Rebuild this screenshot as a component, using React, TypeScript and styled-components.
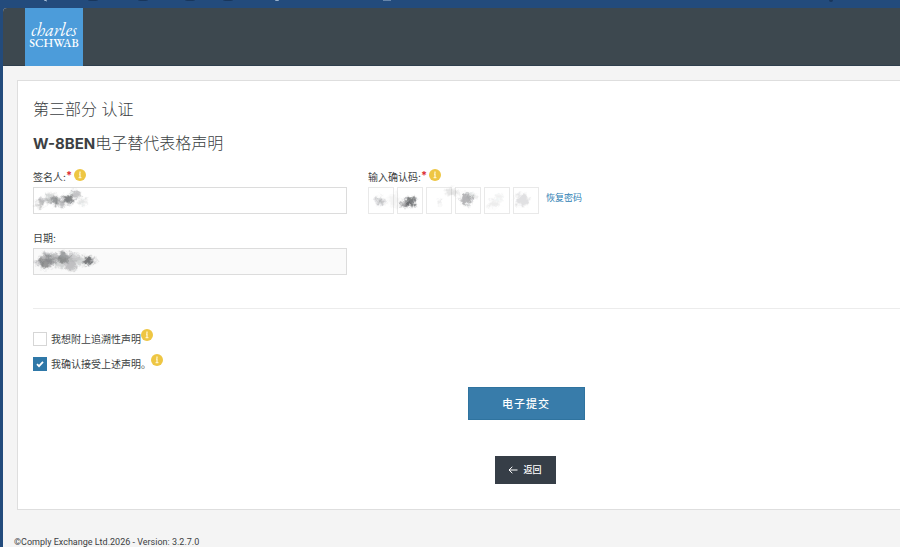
import React from 'react';
import styled, { createGlobalStyle } from 'styled-components';

const Global = createGlobalStyle`
  * { box-sizing: border-box; }
  html, body { margin: 0; min-height: 100%; background: #f4f4f4; }
  body {
    color: #3c3f43;
    font-family: Inter, "Noto Sans CJK SC", sans-serif;
    font-size: 10px;
    line-height: 16px;
  }
`;

const Desktop = styled.div`
  background: #234b7c;
  padding-left: 3px;
`;

const DesktopStrip = styled.svg`
  display: block;
  width: 100%;
  height: 8px;
`;

const Windowed = styled.div`
  min-height: calc(100vh - 8px);
  background: #f4f4f4;
  border-top-left-radius: 4px;
  overflow: hidden;
`;

const Header = styled.header`
  display: flex;
  height: 58px;
  padding-left: 22px;
  background: #3d484f;
  border-bottom: 1px solid #2f3f4d;
`;

const Brand = styled.a`
  display: flex;
  flex-direction: column;
  align-items: center;
  width: 58px;
  height: 58px;
  padding-top: 14px;
  background: #4c9cda;
  color: #fff;
  font-family: "EB Garamond", "Liberation Serif", serif;
  text-decoration: none;
`;

const BrandFirst = styled.span`
  font-size: 18px;
  font-style: italic;
  line-height: 16px;
`;

const BrandLast = styled.span`
  font-size: 12px;
  font-weight: 500;
  line-height: 10px;
`;

const Card = styled.main`
  margin: 14px 0 0 14px;
  padding: 18px 0 25px 15px;
  background: #fff;
  border: 1px solid #dedede;
  border-right: 0;
`;

const Title = styled.h1`
  margin: 0;
  font-size: 16px;
  font-weight: 300;
  line-height: 20px;
`;

const Subtitle = styled.h2`
  margin: 14px 0 0;
  font-size: 16px;
  font-weight: 300;
  line-height: 20px;
`;

const FormCode = styled.strong`
  font-size: 15px;
  font-weight: 700;
`;

const Form = styled.form`
  display: block;
`;

const Fields = styled.div`
  display: grid;
  grid-template-columns: 314px 1fr;
  gap: 16px 21px;
  margin-top: 15px;
`;

const Field = styled.div`
  min-width: 0;
`;

const LabelRow = styled.div`
  display: flex;
  align-items: center;
  height: 16px;
  margin-bottom: 2px;
`;

const Label = styled.label`
  line-height: 16px;
`;

const Required = styled.span`
  align-self: flex-start;
  margin-right: 2px;
  color: #dc3035;
  font-size: 11px;
  font-weight: 700;
  line-height: 12px;
`;

const InputBox = styled.div`
  position: relative;
`;

const TextInput = styled.input<{ $muted?: boolean }>`
  display: block;
  width: 100%;
  height: 27px;
  padding: 4px 6px;
  border: 1px solid #dcdcdc;
  border-radius: 0;
  background: ${p => (p.$muted ? '#fafafa' : '#fff')};
  font: inherit;
`;

const CodeRow = styled.div`
  display: flex;
  align-items: center;
  gap: 3px;
  position: relative;
`;

const CodeInput = styled.input`
  width: 26px;
  height: 27px;
  padding: 0;
  border: 1px solid #e9e9e9;
  border-radius: 0;
  background: #fff;
  font: inherit;
  text-align: center;
`;

const RecoverLink = styled.a`
  margin: 0 0 5px 4px;
  color: #2f7fb5;
  font-size: 9px;
  text-decoration: none;
`;

const Smudge = styled.svg`
  position: absolute;
  top: 0;
  left: 0;
  overflow: visible;
  pointer-events: none;
`;

const Divider = styled.hr`
  height: 1px;
  margin: 33px 0 20px;
  border: 0;
  background: #ececec;
`;

const CheckRow = styled.div`
  display: flex;
  align-items: center;
  height: 20px;
  margin-bottom: 5px;
`;

const CheckInput = styled.input`
  appearance: none;
  flex: none;
  width: 14px;
  height: 14px;
  margin: 0 4px 0 0;
  border: 1px solid #d6d6d6;
  background: #fff;
  &:checked {
    border-color: #2f78a8;
    background: #2f78a8;
  }
`;

const CheckControl = styled.span`
  display: flex;
  position: relative;
`;

const Tick = styled.svg`
  position: absolute;
  top: 3px;
  left: 3px;
  pointer-events: none;
  input:not(:checked) + & { display: none; }
`;

const InfoButton = styled.button`
  display: flex;
  align-self: flex-start;
  padding: 0;
  border: 0;
  background: none;
`;

const Actions = styled.div`
  display: flex;
  flex-direction: column;
  align-items: center;
  gap: 36px;
  margin-top: 13px;
  padding-left: 119px;
`;

const SubmitButton = styled.button`
  width: 117px;
  height: 33px;
  padding: 0;
  border: 1px solid #2f739f;
  background: #387caa;
  color: #fff;
  font: inherit;
  font-size: 11px;
  font-weight: 500;
  letter-spacing: 1px;
`;

const BackButton = styled.button`
  display: flex;
  align-items: center;
  justify-content: center;
  gap: 5px;
  width: 61px;
  height: 28px;
  margin-right: 2px;
  padding: 0;
  border: 0;
  background: #363e47;
  color: #fff;
  font: inherit;
  font-size: 9px;
  font-weight: 500;
`;

const Footer = styled.footer`
  padding: 26px 11px 0;
  font-family: Roboto, sans-serif;
  font-size: 9px;
  line-height: 12px;
`;

function Info() {
  return (
    <InfoButton type="button" aria-label="帮助">
      <svg width="12" height="12" viewBox="0 0 12 12">
        <circle cx="6" cy="6" r="6" fill="#eec643" />
        <path d="M6 2.6v1.3M5 5h1v3.6M4.6 8.6h2.8" fill="none" stroke="#fff4cc" strokeWidth="1.3" />
      </svg>
    </InfoButton>
  );
}

type Blob = [x: number, y: number, rx: number, ry: number, opacity: number];

function Scribble({ id, blobs, width }: { id: string; blobs: Blob[]; width: number }) {
  return (
    <Smudge width={width} height="27" aria-hidden="true">
      <defs>
        <filter id={id} x="-10%" y="-30%" width="120%" height="160%">
          <feGaussianBlur in="SourceGraphic" stdDeviation="1" result="soft" />
          <feTurbulence type="fractalNoise" baseFrequency="0.22" numOctaves="3" seed="8" result="n" />
          <feDisplacementMap in="soft" in2="n" scale="8" xChannelSelector="R" yChannelSelector="G" />
          <feGaussianBlur stdDeviation="0.4" />
        </filter>
      </defs>
      <g filter={`url(#${id})`} fill="#44474a">
        {blobs.map(([x, y, rx, ry, o], i) => (
          <ellipse key={i} cx={x} cy={y} rx={rx} ry={ry} opacity={o} />
        ))}
      </g>
    </Smudge>
  );
}

const signature: Blob[] = [
  [7, 17, 4, 4, 0.3], [12, 13, 6, 3, 0.25], [17, 10, 5, 4, 0.22], [22, 14, 4, 4, 0.5],
  [28, 15, 6, 4, 0.25], [36, 12, 5, 4, 0.6], [43, 7, 5, 4, 0.32], [34, 14, 8, 4, 0.2], [50, 15, 4, 3, 0.15],
];

const dateMarks: Blob[] = [
  [6, 15, 4, 3, 0.32], [13, 13, 7, 8, 0.38], [20, 10, 7, 5, 0.32], [12, 15, 4, 6, 0.3],
  [31, 9, 6, 6, 0.5], [26, 14, 8, 5, 0.22], [38, 17, 6, 6, 0.32], [41, 9, 5, 4, 0.25],
  [49, 13, 6, 4, 0.22], [55, 13, 4, 4, 0.65], [59, 12, 4, 3, 0.32],
];

const codeMarks: Blob[] = [
  [12, 14, 6, 5, 0.16], [12, 14, 3, 3, 0.25], [37, 17, 5, 3, 0.45], [43, 15, 5, 5, 0.7],
  [26, 13, 5, 7, 0.06], [72, 15, 1, 3, 0.2], [84, 5, 7, 4, 0.14], [98, 12, 6, 6, 0.4],
  [104, 9, 4, 3, 0.15], [126, 17, 6, 4, 0.1], [131, 10, 4, 3, 0.08], [154, 13, 7, 6, 0.16],
];

export default function App() {
  return (
    <>
      <Global />
      <Desktop>
        <DesktopStrip aria-hidden="true">
          <g fill="#19365b">
            {[90, 140, 187, 225].map(x => <ellipse key={x} cx={x} cy="0" rx="5" ry="1" />)}
            <circle cx="828" cy="0" r="2" />
          </g>
          <path d="M41 0l3 1M272 0q2 1 4 0M380 0h8" stroke="#a9bfd8" fill="none" />
        </DesktopStrip>
        <Windowed>
          <Header>
            <Brand href="#" aria-label="Charles Schwab">
              <BrandFirst>charles</BrandFirst>
              <BrandLast>SCHWAB</BrandLast>
            </Brand>
          </Header>
          <Card>
            <Title>第三部分 认证</Title>
            <Subtitle><FormCode>W-8BEN</FormCode>电子替代表格声明</Subtitle>
            <Form onSubmit={e => e.preventDefault()}>
              <Fields>
                <Field>
                  <LabelRow>
                    <Label htmlFor="signer">签名人:</Label>
                    <Required>*</Required>
                    <Info />
                  </LabelRow>
                  <InputBox>
                    <TextInput id="signer" />
                    <Scribble id="ink-signer" blobs={signature} width={70} />
                  </InputBox>
                </Field>
                <Field>
                  <LabelRow>
                    <Label htmlFor="code-1">输入确认码:</Label>
                    <Required>*</Required>
                    <Info />
                  </LabelRow>
                  <CodeRow>
                    {[1, 2, 3, 4, 5, 6].map(n => (
                      <CodeInput key={n} id={`code-${n}`} aria-label={`确认码 ${n}`} maxLength={1} />
                    ))}
                    <Scribble id="ink-code" blobs={codeMarks} width={171} />
                    <RecoverLink href="#">恢复密码</RecoverLink>
                  </CodeRow>
                </Field>
                <Field>
                  <LabelRow>
                    <Label htmlFor="date">日期:</Label>
                  </LabelRow>
                  <InputBox>
                    <TextInput id="date" $muted readOnly />
                    <Scribble id="ink-date" blobs={dateMarks} width={70} />
                  </InputBox>
                </Field>
              </Fields>
              <Divider />
              <CheckRow>
                <CheckControl>
                  <CheckInput type="checkbox" id="retro" />
                </CheckControl>
                <Label htmlFor="retro">我想附上追溯性声明</Label>
                <Info />
              </CheckRow>
              <CheckRow>
                <CheckControl>
                  <CheckInput type="checkbox" id="accept" defaultChecked />
                  <Tick width="8" height="8" viewBox="0 0 8 8">
                    <path d="M1 4.2l2 2L7 1.8" fill="none" stroke="#fff" strokeWidth="1.8" />
                  </Tick>
                </CheckControl>
                <Label htmlFor="accept">我确认接受上述声明。</Label>
                <Info />
              </CheckRow>
              <Actions>
                <SubmitButton type="submit">电子提交</SubmitButton>
                <BackButton type="button">
                  <svg width="10" height="8" viewBox="0 0 10 8" aria-hidden="true">
                    <path d="M9.5 4H1M4.3 .8L1 4l3.3 3.2" fill="none" stroke="#fff" />
                  </svg>
                  返回
                </BackButton>
              </Actions>
            </Form>
          </Card>
          <Footer>©Comply Exchange Ltd.2026 - Version: 3.2.7.0</Footer>
        </Windowed>
      </Desktop>
    </>
  );
}
